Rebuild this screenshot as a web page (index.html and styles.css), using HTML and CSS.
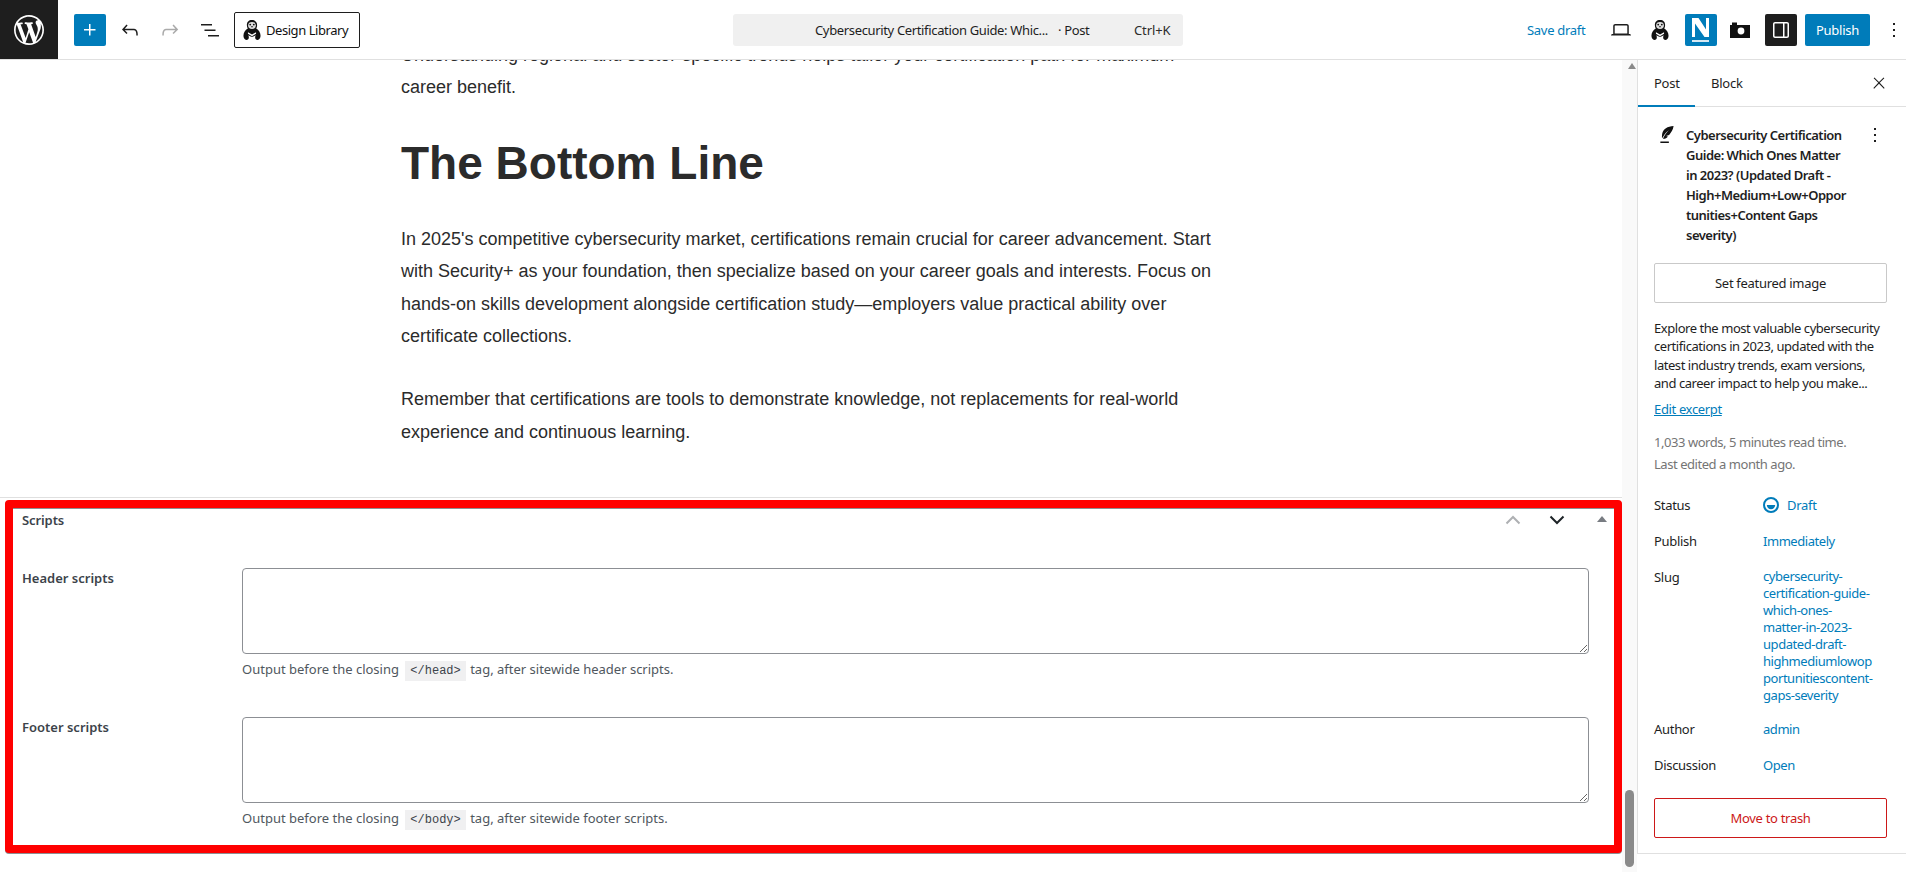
FILE: index.html
```html
<!DOCTYPE html>
<html lang="en">
<head>
<meta charset="utf-8">
<title>Edit Post</title>
<link rel="stylesheet" href="styles.css">
</head>
<body>
<svg class="defs" width="0" height="0" aria-hidden="true">
  <symbol id="penguin" viewBox="0 0 20 22">
    <path d="M10 0C6.300 0 4.300 2.300 4.300 5.500c0 1.500.4 2.800 1 3.800C2.500 11 .5 14 .5 17.500c0 2.500 1.200 4.500 3.300 4.500 1.700 0 2.700-1.200 2.700-2.800 0-1-.3-1.700-.5-2.500l3 1.800h2l3-1.800c-.2.8-.5 1.500-.5 2.500 0 1.600 1 2.800 2.700 2.800 2.100 0 3.300-2 3.300-4.500 0-3.500-2-6.500-4.800-8.200.6-1 1-2.300 1-3.800C15.700 2.300 13.700 0 10 0z" fill="#111"/>
    <ellipse cx="10" cy="6" rx="4.300" ry="3.800" fill="#ddd"/>
    <circle cx="8" cy="5" r="1" fill="#111"/><circle cx="12" cy="5" r="1" fill="#111"/>
    <path d="M8.700 6.800h2.600L10 8.600z" fill="#111"/>
    <path d="M5.500 13.500L10 16l4.500-2.500v1.700L10 18l-4.500-2.800z" fill="#fff"/>
  </symbol>
</svg>

<header class="topbar">
  <div class="topbar-left">
    <a class="wp-logo">
      <svg viewBox="0 0 20 20" width="30" height="30"><path fill="#fff" d="M20 10c0-5.510-4.490-10-10-10C4.480 0 0 4.490 0 10c0 5.520 4.480 10 10 10 5.510 0 10-4.480 10-10zM7.780 15.370L4.370 6.220c.55-.02 1.170-.08 1.170-.08.5-.06.44-1.130-.06-1.110 0 0-1.450.11-2.370.11-.18 0-.37 0-.58-.01C4.120 2.690 6.870 1.110 10 1.110c2.330 0 4.450.87 6.050 2.340-.68-.11-1.650.39-1.650 1.580 0 .74.45 1.360.9 2.100.35.61.55 1.360.55 2.460 0 1.490-1.400 5-1.400 5l-3.030-8.370c.54-.02.82-.17.82-.17.5-.05.44-1.250-.06-1.220 0 0-1.440.12-2.380.12-.87 0-2.330-.12-2.330-.12-.5-.03-.56 1.200-.06 1.220l.92.08 1.260 3.410zM17.410 10c.24-.64.74-1.870.43-4.250.7 1.290 1.050 2.710 1.050 4.250 0 3.290-1.730 6.240-4.400 7.780.97-2.590 1.940-5.200 2.920-7.780zM6.100 18.090C3.120 16.650 1.110 13.530 1.110 10c0-1.300.23-2.480.72-3.590C3.250 10.300 4.670 14.200 6.100 18.090zm4.030-6.630l2.580 6.980c-.86.29-1.760.45-2.710.45-.79 0-1.570-.11-2.290-.33.81-2.380 1.620-4.740 2.420-7.100z"/></svg>
    </a>
    <button class="icon-btn primary add"><svg viewBox="0 0 24 24" width="24" height="24"><path fill="#fff" d="M11 12.500V17.500H12.500V12.500H17.500V11H12.500V6H11V11H6V12.500H11Z"/></svg></button>
    <button class="icon-btn tool"><svg viewBox="0 0 24 24" width="24" height="24"><path fill="#1e1e1e" d="M18.300 11.700c-.6-.6-1.400-.9-2.300-.9H6.700l2.900-3.300-1.100-1-4.500 5L8.500 16l1-1-2.700-2.700H16c.5 0 .9.2 1.300.5 1 1 1 3.400 1 4.500v.3h1.500v-.2c0-1.500 0-4.300-1.500-5.700z"/></svg></button>
    <button class="icon-btn tool"><svg viewBox="0 0 24 24" width="24" height="24"><path fill="#aaa" d="M15.600 6.500l-1.100 1 2.900 3.300H8c-.9 0-1.700.3-2.300.9-1.400 1.500-1.400 4.200-1.400 5.600v.2h1.500v-.3c0-1.100 0-3.500 1-4.500.3-.3.7-.5 1.300-.5h9.200L14.500 15l1.100 1.100 4.600-4.600-4.600-5z"/></svg></button>
    <button class="icon-btn tool"><svg viewBox="0 0 24 24" width="24" height="24"><path fill="#1e1e1e" d="M3 6h11v1.500H3V6zm3.500 5.500h11V13h-11v-1.500zM21 17H10v1.500h11V17z"/></svg></button>
    <button class="library"><svg width="18" height="20"><use href="#penguin"/></svg><span>Design Library</span></button>
  </div>
  <div class="command">
    <span class="command-title">Cybersecurity Certification Guide: Whic...</span>
    <span class="command-type">· Post</span>
    <span class="command-key">Ctrl+K</span>
  </div>
  <div class="topbar-right">
    <a class="save">Save draft</a>
    <button class="icon-btn laptop"><svg viewBox="0 0 24 24" width="24" height="24"><path fill="#1e1e1e" d="M20.500 16h-.7V8c0-1.100-.9-2-2-2H6.200c-1.100 0-2 .9-2 2v8h-.7c-.8 0-1.500.7-1.500 1.500h20c0-.8-.7-1.500-1.500-1.500zM5.700 8c0-.3.2-.5.5-.5h11.600c.3 0 .5.2.5.5v7.600H5.700V8z"/></svg></button>
    <button class="icon-btn peng"><svg width="18" height="20"><use href="#penguin"/></svg></button>
    <button class="icon-btn primary news"><svg viewBox="0 0 32 32" width="32" height="32"><path fill="#fff" d="M7 4h6.500l7.500 11.500V4h3v19h-4.500L10 9.500V23H7z"/><rect x="7" y="26" width="17" height="2" fill="#d5e8f3"/></svg></button>
    <button class="icon-btn cam"><svg viewBox="0 0 20 16" width="20" height="16"><path fill="#111" d="M0 3h2V.5h5V3h13v13H0z"/><circle cx="11" cy="9" r="3.400" fill="#fff"/></svg></button>
    <button class="icon-btn dark toggle"><svg viewBox="0 0 24 24" width="24" height="24"><path fill="#fff" d="M18 4H6c-1.100 0-2 .9-2 2v12c0 1.100.9 2 2 2h12c1.100 0 2-.9 2-2V6c0-1.100-.9-2-2-2zm-4 14.500H6c-.3 0-.5-.2-.5-.5V6c0-.3.2-.5.5-.5h8v13zm4.500-.5c0 .3-.2.500-.5.500h-2.500v-13H18c.3 0 .5.2.5.5v12z"/></svg></button>
    <button class="publish">Publish</button>
    <button class="icon-btn dots"><svg viewBox="0 0 24 24" width="24" height="24"><path fill="#1e1e1e" d="M13 19h-2v-2h2v2zm0-6h-2v-2h2v2zm0-6h-2V5h2v2z"/></svg></button>
  </div>
</header>

<div class="workspace">
  <main class="editor">
    <article class="article">
      <p class="clipped">Understanding regional and sector-specific trends helps tailor your certification path for maximum career benefit.</p>
      <h1>The Bottom Line</h1>
      <p>In 2025's competitive cybersecurity market, certifications remain crucial for career advancement. Start with Security+ as your foundation, then specialize based on your career goals and interests. Focus on hands-on skills development alongside certification study—employers value practical ability over certificate collections.</p>
      <p>Remember that certifications are tools to demonstrate knowledge, not replacements for real-world experience and continuous learning.</p>
    </article>
    <section class="metabox">
      <div class="metabox-head">
        <h2>Scripts</h2>
        <div class="metabox-controls">
          <svg class="chev" viewBox="0 0 16 10" width="16" height="10"><path d="M1.500 8.500L8 2l6.500 6.500" fill="none" stroke="#aeb0b3" stroke-width="2"/></svg>
          <svg class="chev" viewBox="0 0 16 10" width="16" height="10"><path d="M1.500 1.500L8 8l6.500-6.500" fill="none" stroke="#1d2327" stroke-width="2"/></svg>
          <span class="caret"></span>
        </div>
      </div>
      <div class="field">
        <label>Header scripts</label>
        <div class="field-main">
          <textarea></textarea>
          <p class="help">Output before the closing <code>&lt;/head&gt;</code> tag, after sitewide header scripts.</p>
        </div>
      </div>
      <div class="field">
        <label>Footer scripts</label>
        <div class="field-main">
          <textarea></textarea>
          <p class="help">Output before the closing <code>&lt;/body&gt;</code> tag, after sitewide footer scripts.</p>
        </div>
      </div>
    </section>
  </main>

  <div class="scrollbar">
    <span class="scroll-up"></span>
    <span class="scroll-thumb"></span>
  </div>

  <aside class="sidebar">
    <div class="tabs">
      <span class="tab active">Post</span>
      <span class="tab">Block</span>
      <svg class="close" viewBox="0 0 24 24" width="18" height="18"><path fill="#1e1e1e" d="M13 11.800l6.100-6.300-1-1-6.100 6.200-6.100-6.200-1 1 6.100 6.300-6.500 6.700 1 1 6.500-6.600 6.500 6.600 1-1z"/></svg>
    </div>
    <div class="panel">
      <div class="card">
        <svg class="quill" viewBox="0 0 18 20" width="17" height="19"><path fill="#111" d="M16.500 1C10 1.500 5.500 4 4.500 9c-.4 2-.4 3.500-.2 5l1.300-2C7 9.500 9 7 11.500 5.500 9 8 7 10.500 5.200 14.500c2 .3 4-.5 5.300-2.500l-2-.3 3.300-1.200c2-2.500 4.200-5.500 4.700-9.500zM2.500 17.500h9V19h-9z"/></svg>
        <h3>Cybersecurity Certification Guide: Which Ones Matter in 2023? (Updated Draft - High+Medium+Low+Oppor<wbr>tunities+Content Gaps severity)</h3>
        <svg class="card-more" viewBox="0 0 24 24" width="24" height="24"><path fill="#1e1e1e" d="M13 19h-2v-2h2v2zm0-6h-2v-2h2v2zm0-6h-2V5h2v2z"/></svg>
      </div>
      <button class="featured">Set featured image</button>
      <p class="excerpt">Explore the most valuable cybersecurity certifications in 2023, updated with the latest industry trends, exam versions, and career impact to help you make...</p>
      <a class="edit-excerpt">Edit excerpt</a>
      <p class="stats">1,033 words, 5 minutes read time.<br>Last edited a month ago.</p>
      <dl class="rows">
        <div class="row"><dt>Status</dt><dd class="status"><svg viewBox="0 0 18 18" width="18" height="18"><circle cx="9" cy="9" r="7" fill="none" stroke="#007cba" stroke-width="2"/><path d="M4.800 9h8.400a4.200 4.200 0 0 1-8.400 0z" fill="#007cba"/></svg>Draft</dd></div>
        <div class="row"><dt>Publish</dt><dd>Immediately</dd></div>
        <div class="row row-slug"><dt>Slug</dt><dd class="slug">cybersecurity-certification-guide-which-ones-<br>matter-in-2023-<br>updated-draft-<br>highmediumlowop<wbr>portunitiescontent-gaps-severity</dd></div>
        <div class="row"><dt>Author</dt><dd>admin</dd></div>
        <div class="row"><dt>Discussion</dt><dd>Open</dd></div>
      </dl>
      <button class="trash">Move to trash</button>
    </div>
  </aside>
</div>
</body>
</html>
```

FILE: styles.css
```css
* { box-sizing: border-box; }
html, body { margin: 0; height: 100%; }
body {
  width: 1906px; height: 872px; overflow: hidden; background: #fff;
  font-family: "Noto Sans", Roboto, sans-serif; font-size: 13px; color: #1e1e1e;
  display: flex; flex-direction: column;
}
.defs { position: absolute; }
button { font: inherit; padding: 0; border: 0; background: none; color: inherit; }
p, h1, h2, h3, dl, dd { margin: 0; }

.topbar {
  height: 60px; flex: none; display: flex; align-items: center;
  border-bottom: 1px solid #e0e0e0; position: relative; z-index: 2; background: #fff;
}
.topbar-left { display: flex; align-items: center; height: 59px; width: 733px; flex: none; }
.wp-logo { width: 58px; height: 59px; background: #1e1e1e; display: flex; align-items: center; justify-content: center; }
.icon-btn { width: 32px; height: 32px; display: flex; align-items: center; justify-content: center; border-radius: 2px; flex: none; }
.primary { background: #007cba; }
.dark { background: #1e1e1e; }
.add { margin-left: 16px; margin-right: 8px; }
.tool { margin-right: 8px; }
.library {
  display: flex; align-items: center; gap: 5px; width: 126px; height: 36px; padding-left: 8px;
  border: 1px solid #1e1e1e; border-radius: 2px; color: #111; letter-spacing: -.45px;
}
.command {
  width: 450px; height: 32px; flex: none; background: #f0f0f0; border-radius: 3px;
  display: flex; align-items: center; padding-left: 82px; letter-spacing: -.35px; color: #1e1e1e;
}
.command-title { width: 243px; flex: none; white-space: nowrap; }
.command-type { width: 76px; flex: none; }
.command-key { color: #2c2c2c; letter-spacing: -.1px; }
.topbar-right { flex: 1; display: flex; align-items: center; height: 59px; padding-left: 344px; }
.save { color: #007cba; width: 78px; flex: none; letter-spacing: -.3px; }
.laptop { margin-right: 7px; }
.peng { margin-right: 9px; }
.news { margin-right: 7px; }
.cam { margin-right: 9px; }
.toggle { margin-right: 8px; }
.publish { width: 65px; height: 32px; background: #007cba; color: #fff; border-radius: 2px; letter-spacing: -.25px; margin-right: 8px; flex: none; }
.dots { width: 32px; }

.workspace { flex: 1; display: flex; min-height: 0; }
.editor { flex: 1; min-width: 0; overflow: hidden; display: flex; flex-direction: column; }
.article {
  flex: none; height: 461px; padding-left: 401px; width: 1215px; margin-top: -21px;
  font-family: "Liberation Sans", Arial, sans-serif; font-size: 18px; line-height: 32.400px; color: #2b2b2b;
}
.article p { margin-bottom: 31px; }
.article h1 { font-size: 46px; line-height: 54px; font-weight: 700; color: #2b2b2b; margin: 32px 0 33px; }
.article p.clipped { margin-bottom: 0; }

.metabox {
  margin-left: 5px; width: 1617px; height: 353px; border: 8px solid #f00; border-radius: 4px;
  box-shadow: 0 1px 0 #8c8f94, inset 0 1px 0 #8c8f94; background: #fff; padding: 0 25px 0 9px; flex: none;
  position: relative; color: #3c434a; font-size: 13px;
}
.metabox::before { content: ""; position: absolute; left: -13px; right: -8px; top: -11px; height: 1px; background: #e0e0e0; }
.metabox-head { height: 60px; display: flex; justify-content: space-between; padding-top: 3px; }
.metabox-head h2 { font-size: 13px; font-weight: 600; line-height: 18px; letter-spacing: -.1px; }
.metabox-controls { display: flex; gap: 28px; align-items: flex-start; margin-right: -22px; padding-top: 4px; }
.caret { width: 0; height: 0; border: 5px solid transparent; border-top: 0; border-bottom: 6px solid #787c82; margin: 1px 4px 0 4px; }
.field { display: flex; height: 149px; }
.field label { width: 220px; flex: none; font-weight: 600; line-height: 20px; }
.field-main { flex: 1; min-width: 0; }
textarea { display: block; width: 100%; height: 86px; border: 1px solid #8c8f94; border-radius: 4px; background: #fff; margin: 0; }
.help { margin-top: 5px; line-height: 20px; color: #50575e; white-space: nowrap; }
code {
  display: inline-block; font-family: "Liberation Mono", monospace; font-size: 12px; line-height: 20px; padding: 0 5px; background: #f0f0f1; color: #3c434a; margin: 0 1px 0 3px;
}

.scrollbar { width: 15px; flex: none; background: #f9f9f9; position: relative; display: flex; flex-direction: column; align-items: center; padding-top: 3px; padding-left: 4px; }
.scroll-up { width: 0; height: 0; border: 4.500px solid transparent; border-top: 0; border-bottom: 6px solid #8a8a8a; }
.scroll-thumb { position: absolute; top: 730px; left: 3px; width: 9px; height: 77px; background: #8a8a8a; border-radius: 5px; }

.sidebar { width: 269px; flex: none; border-left: 1px solid #e0e0e0; background: #fff; height: 794px; border-bottom: 1px solid #e0e0e0; }
.tabs { height: 47px; display: flex; align-items: center; border-bottom: 1px solid #e0e0e0; position: relative; }
.tab { padding: 0 16px; height: 47px; line-height: 46px; color: #1e1e1e; letter-spacing: -.25px; width: 57px; flex: none; white-space: nowrap; }
.tab.active { box-shadow: inset 0 -2px 0 #007cba; }
.close { position: absolute; right: 18px; top: 14px; }
.panel { padding: 18px 18px 0 16px; }
.card { display: flex; align-items: flex-start; min-height: 130px; position: relative; font-weight: 600; }
.quill { margin: 0 0 0 4px; flex: none; }
.card h3 { font-size: 13px; font-weight: 600; line-height: 20px; width: 166px; margin-left: 11px; letter-spacing: -.5px; overflow-wrap: anywhere; color: #1e1e1e; }
.card-more { position: absolute; left: 209px; top: -2px; }
.featured { display: block; width: 233px; height: 40px; border: 1px solid #c9c9c9; border-radius: 2px; margin-top: 8px; letter-spacing: -.3px; }
.excerpt { margin-top: 16px; line-height: 18.300px; letter-spacing: -.45px; }
.edit-excerpt { display: block; margin-top: 8px; line-height: 18px; color: #007cba; text-decoration: underline; letter-spacing: -.35px; }
.stats { margin-top: 13px; color: #757575; line-height: 22px; letter-spacing: -.45px; }
.rows { margin-top: 21px; }
.row { display: flex; margin-bottom: 18px; line-height: 18px; letter-spacing: -.3px; }
.row-slug { margin-bottom: 16px; }
.row dt { width: 109px; flex: none; }
.row dd { color: #007cba; width: 114px; letter-spacing: -.45px; }
.row dd.status { display: flex; align-items: center; gap: 7px; letter-spacing: -.3px; }
.status svg { margin-left: -1px; }
.row dd.slug { line-height: 17px; letter-spacing: -.45px; }
.trash { display: block; width: 233px; height: 40px; border: 1px solid #cc1818; border-radius: 2px; color: #cc1818; letter-spacing: -.3px; margin-top: 24px; }
```
